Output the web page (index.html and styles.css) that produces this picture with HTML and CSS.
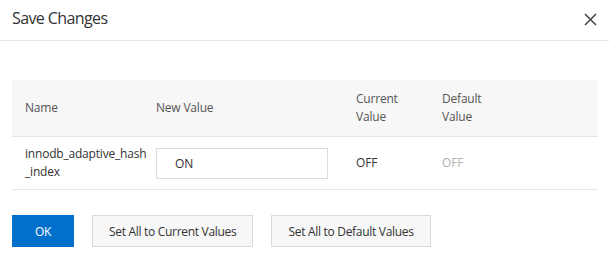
FILE: index.html
```html
<!DOCTYPE html>
<html lang="en">
<head>
  <meta charset="UTF-8">
  <title>Save Changes</title>
  <link rel="stylesheet" href="styles.css">
</head>
<body>
  <div class="dialog">
    <div class="dialog-header">
      <span class="dialog-title">Save Changes</span>
      <span class="close">
        <svg width="13" height="13" viewBox="0 0 13 13"><path d="M1 1L12 12M12 1L1 12" stroke="#444" stroke-width="1.5" fill="none"/></svg>
      </span>
    </div>

    <div class="dialog-body">
      <table class="params">
        <thead>
          <tr>
            <th class="col-name">Name</th>
            <th class="col-new">New Value</th>
            <th class="col-cur">Current<br>Value</th>
            <th class="col-def">Default<br>Value</th>
          </tr>
        </thead>
        <tbody>
          <tr>
            <td>innodb_adaptive_hash<br>_index</td>
            <td><div class="value-box">ON</div></td>
            <td>OFF</td>
            <td class="muted">OFF</td>
          </tr>
        </tbody>
      </table>
    </div>

    <div class="dialog-footer">
      <button class="btn btn-primary">OK</button>
      <button class="btn">Set All to Current Values</button>
      <button class="btn">Set All to Default Values</button>
    </div>
  </div>
</body>
</html>
```

FILE: styles.css
```css
body {
  margin: 0;
  background: #fff;
  font-family: "Open Sans", "Noto Sans", sans-serif;
  color: #333;
}

.dialog {
  width: 609px;
}

.dialog-header {
  height: 41px;
  border-bottom: 1px solid #e5e5e5;
  display: flex;
  align-items: center;
  justify-content: space-between;
  padding: 0 12px 0 12px;
  box-sizing: border-box;
}

.dialog-title {
  font-size: 16px;
  color: #333;
  letter-spacing: -0.6px;
  margin-top: -5px;
}

.close {
  display: flex;
  margin-top: -2px;
}

.dialog-body {
  padding: 39px 11px 0 12px;
}

.params {
  width: 100%;
  border-collapse: collapse;
  font-size: 12px;
  letter-spacing: -0.2px;
}

.params th {
  background: #f7f7f7;
  font-weight: normal;
  color: #555;
  text-align: left;
  height: 56px;
  line-height: 18px;
  border-bottom: 1px solid #e5e5e5;
  padding: 0;
}

.params td {
  height: 52px;
  line-height: 18px;
  border-bottom: 1px solid #e5e5e5;
  padding: 0;
  color: #333;
}

.params th:first-child,
.params td:first-child {
  padding-left: 13px;
}

.col-name { width: 131px; }
.col-new { width: 200px; }
.col-cur { width: 86px; }

.value-box {
  width: 172px;
  height: 31px;
  border: 1px solid #dcdcdc;
  box-sizing: border-box;
  padding-left: 18px;
  line-height: 29px;
  font-size: 12px;
  margin-top: 1px;
}

.params td.muted {
  color: #b0b0b0;
}

.dialog-footer {
  display: flex;
  gap: 18px;
  padding: 25px 12px 0;
}

.btn {
  height: 32px;
  padding: 0 16px;
  border: 1px solid #d9d9d9;
  background: #f7f7f7;
  color: #333;
  font-family: inherit;
  font-size: 12px;
  letter-spacing: -0.3px;
  cursor: pointer;
}

.btn-primary {
  width: 62px;
  background: #0070cc;
  border-color: #0070cc;
  color: #fff;
  padding: 0;
}
```
